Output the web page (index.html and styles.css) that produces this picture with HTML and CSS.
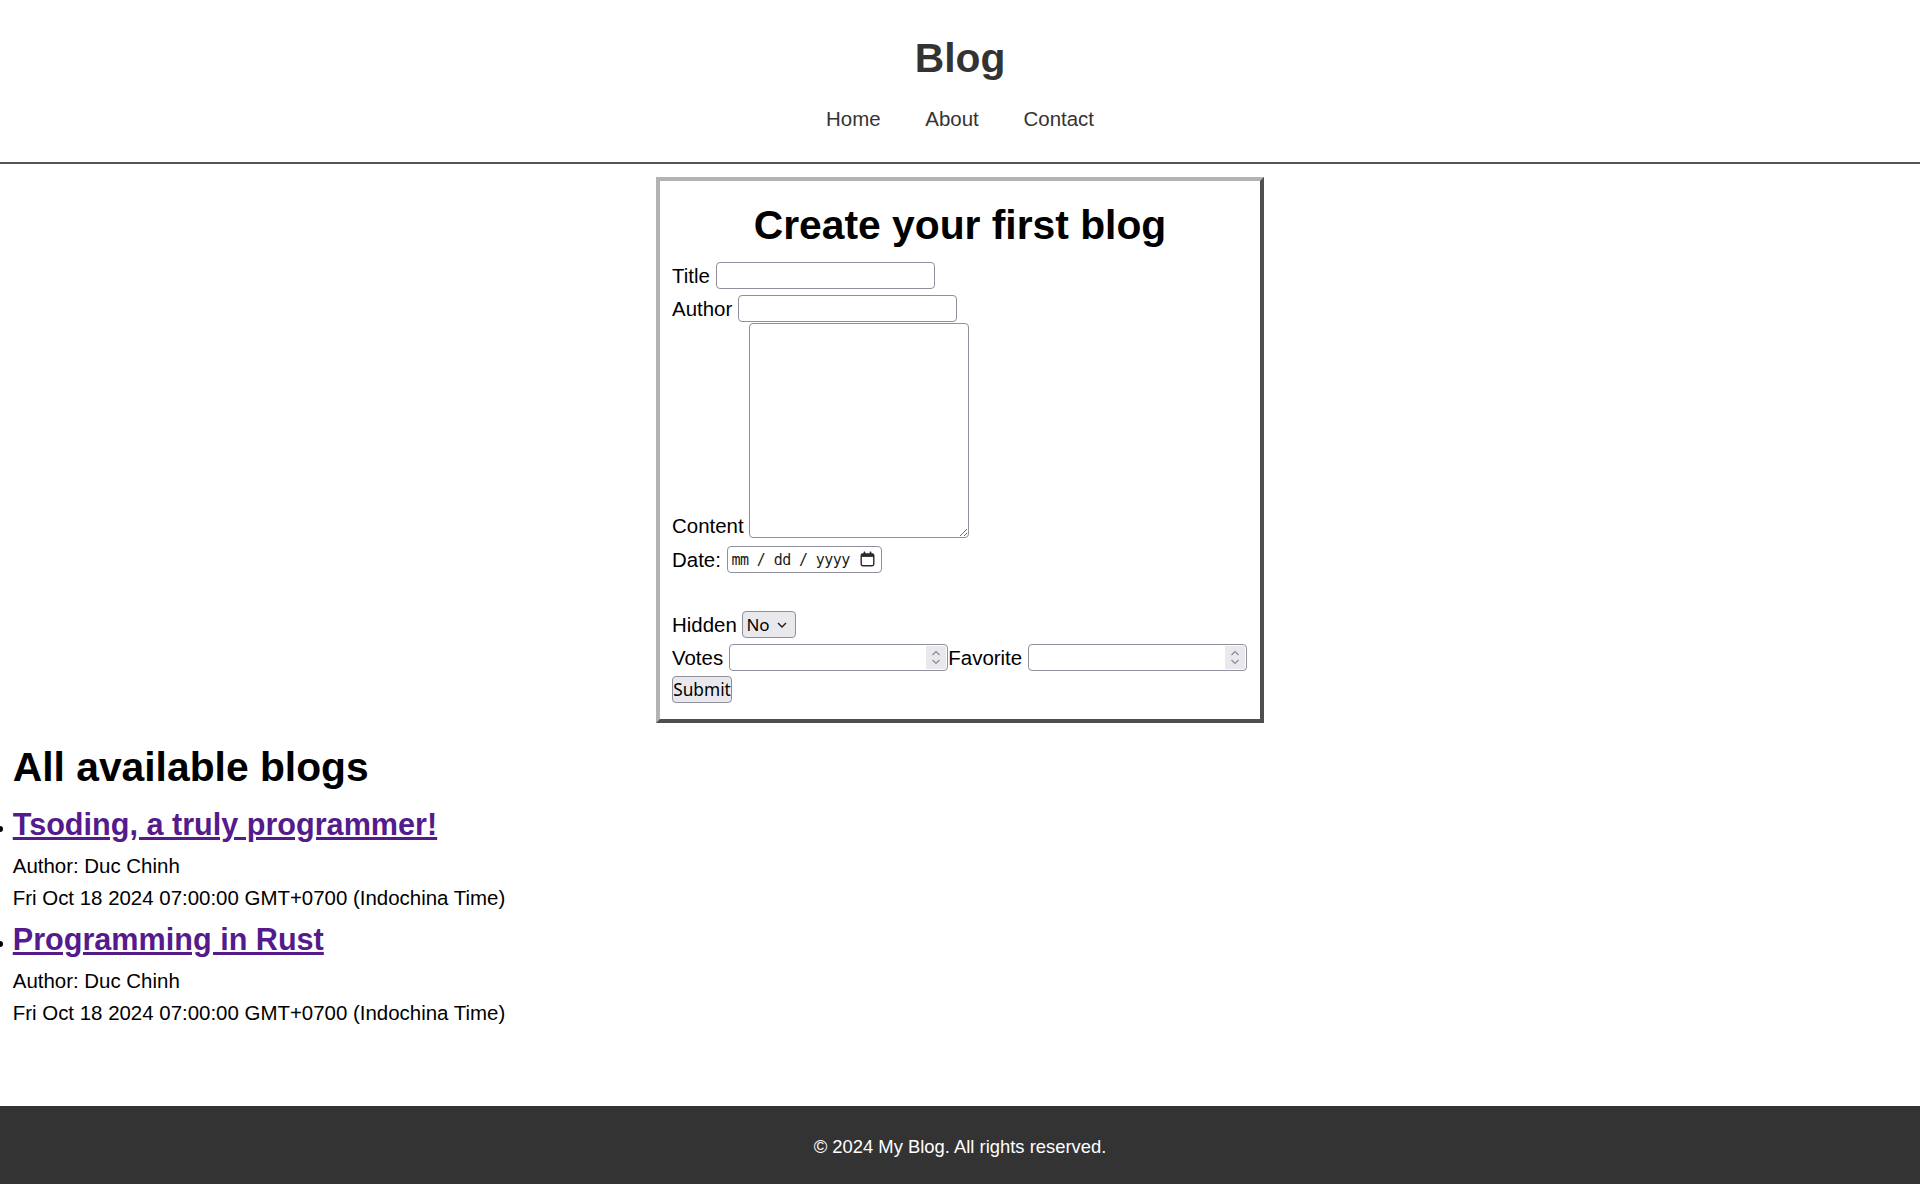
FILE: index.html
```html
<!DOCTYPE html>
<html lang="en">
<head>
<meta charset="utf-8">
<title>Blog</title>
<link rel="stylesheet" href="styles.css">
</head>
<body>
<header class="site-header">
  <h1 class="site-title">Blog</h1>
  <nav class="site-nav">
    <a href="#">Home</a>
    <a href="#">About</a>
    <a href="#">Contact</a>
  </nav>
</header>
<main class="content">
  <section class="create-box">
    <h1 class="create-title">Create your first blog</h1>
    <form class="blog-form">
      <div class="row row-title"><label for="title">Title</label><input class="field text" id="title" type="text"></div>
      <div class="row row-author"><label for="author">Author</label><input class="field text" id="author" type="text"></div>
      <div class="row row-content"><label for="content">Content</label><textarea class="field area" id="content"></textarea></div>
      <div class="row row-date"><label for="date">Date:</label><span class="date-field"><input class="date-input" id="date" type="text" placeholder="mm / dd / yyyy"><svg class="cal" width="15" height="16" viewBox="0 0 15 16"><rect x="1.2" y="2.9" width="12.6" height="11.9" rx="1.7" fill="none" stroke="#2b2b2b" stroke-width="1.4"/><rect x="1.2" y="2.9" width="12.6" height="3" fill="#2b2b2b"/><rect x="3.6" y="0.6" width="1.7" height="3.2" rx="0.5" fill="#2b2b2b"/><rect x="9.7" y="0.6" width="1.7" height="3.2" rx="0.5" fill="#2b2b2b"/></svg></span></div>
      <div class="row row-hidden"><label for="hidden">Hidden</label><span class="select-wrap"><select id="hidden" class="select"><option>No</option><option>Yes</option></select><svg class="chev" width="10" height="6" viewBox="0 0 10 6"><path d="M1 1 L5 5 L9 1" fill="none" stroke="#1a1a1a" stroke-width="1.4"/></svg></span></div>
      <div class="row row-votes"><label for="votes">Votes</label><span class="num-wrap"><input class="field num" id="votes" type="number"><span class="spin"><svg width="10" height="17" viewBox="0 0 10 17"><path d="M1.5 6 L5 2.5 L8.5 6" fill="none" stroke="#8a8a94" stroke-width="1.2"/><path d="M1.5 11 L5 14.5 L8.5 11" fill="none" stroke="#8a8a94" stroke-width="1.2"/></svg></span></span><label for="fav">Favorite</label><span class="num-wrap"><input class="field num" id="fav" type="number"><span class="spin"><svg width="10" height="17" viewBox="0 0 10 17"><path d="M1.5 6 L5 2.5 L8.5 6" fill="none" stroke="#8a8a94" stroke-width="1.2"/><path d="M1.5 11 L5 14.5 L8.5 11" fill="none" stroke="#8a8a94" stroke-width="1.2"/></svg></span></span></div>
      <div class="row row-submit"><button class="submit" type="submit">Submit</button></div>
    </form>
  </section>

  <h1 class="list-title">All available blogs</h1>
  <ul class="blog-list">
    <li class="blog-item">
      <h2 class="blog-name"><a href="#">Tsoding, a truly programmer!</a></h2>
      <p class="meta">Author: Duc Chinh</p>
      <p class="meta">Fri Oct 18 2024 07:00:00 GMT+0700 (Indochina Time)</p>
    </li>
    <li class="blog-item">
      <h2 class="blog-name"><a href="#">Programming in Rust</a></h2>
      <p class="meta">Author: Duc Chinh</p>
      <p class="meta">Fri Oct 18 2024 07:00:00 GMT+0700 (Indochina Time)</p>
    </li>
  </ul>
</main>
<footer class="site-footer">
  <p>© 2024 My Blog. All rights reserved.</p>
</footer>
</body>
</html>
```

FILE: styles.css
```css
html, body {
  margin: 0;
  padding: 0;
}

body {
  font-family: "Liberation Sans", Arial, sans-serif;
  font-size: 20.45px;
  color: #000;
  background: #fff;
  min-height: 100vh;
  display: flex;
  flex-direction: column;
}

/* Header */
.site-header {
  text-align: center;
  padding: 35px 0 31px;
  border-bottom: 2px solid #555;
}

.site-title {
  margin: 0;
  font-size: 40.8px;
  line-height: 47px;
  color: #333;
}

.site-nav {
  margin-top: 25px;
  display: flex;
  justify-content: center;
  gap: 44.75px;
  line-height: 24px;
}

.site-nav a {
  color: #333;
  text-decoration: none;
}

/* Main */
.content {
  flex: 1;
  padding: 0 12.75px;
}

.create-box {
  box-sizing: border-box;
  width: 608px;
  margin: 13px auto 0;
  border: 4px solid;
  border-color: #b3b3b3 #4f4f4f #4f4f4f #b3b3b3;
  padding: 20.5px 12px 16px;
}

.create-title {
  margin: 0;
  text-align: center;
  font-size: 40.8px;
  line-height: 47px;
}

.row {
  display: flex;
  align-items: center;
}

.row label {
  margin-right: 5.7px;
  line-height: 24px;
}

.row-title { margin-top: 13.5px; }
.row-author { margin-top: 6px; }
.row-content { margin-top: 1px; align-items: flex-end; }
.row-date { margin-top: 8.5px; }
.row-hidden { margin-top: 38px; }
.row-votes { margin-top: 6px; }
.row-submit { margin-top: 5px; }

.field {
  box-sizing: border-box;
  margin: 0;
  border: 1px solid #8f8f9d;
  border-radius: 4px;
  background: #fff;
  font-family: "Noto Sans", sans-serif;
  font-size: 17px;
  padding: 1px 3px;
  outline: none;
}

.text {
  width: 219px;
  height: 27px;
}

.area {
  width: 220px;
  height: 214.5px;
  resize: both;
}

/* Date */
.date-field {
  position: relative;
  display: inline-flex;
  align-items: center;
  box-sizing: border-box;
  width: 155px;
  height: 27px;
  border: 1px solid #8f8f9d;
  border-radius: 4px;
  background: #fff;
}

.date-input {
  border: 0;
  outline: none;
  background: transparent;
  width: 124px;
  padding: 0 0 0 4px;
  font-family: "DejaVu Sans Mono", monospace;
  font-size: 15px;
  letter-spacing: -0.6px;
  color: #000;
}

.date-input::placeholder {
  color: #1a1a1a;
  opacity: 1;
}

.cal {
  position: absolute;
  right: 6px;
  top: 4px;
}

/* Select */
.select-wrap {
  position: relative;
  display: inline-block;
}

.select {
  appearance: none;
  -webkit-appearance: none;
  box-sizing: border-box;
  width: 54px;
  height: 27px;
  margin: 0;
  padding: 0 0 0 3px;
  border: 1px solid #8f8f9d;
  border-radius: 4px;
  background: #e9e9ed;
  color: #000;
  font-family: "Noto Sans", sans-serif;
  font-size: 17px;
  display: block;
}

.chev {
  position: absolute;
  right: 9px;
  top: 11px;
  pointer-events: none;
}

/* Number */
.num-wrap {
  position: relative;
  display: inline-block;
}

.num {
  width: 219.5px;
  height: 27px;
  display: block;
  -moz-appearance: textfield;
}

.num::-webkit-inner-spin-button,
.num::-webkit-outer-spin-button {
  -webkit-appearance: none;
  margin: 0;
}

.spin {
  position: absolute;
  right: 2px;
  top: 2px;
  bottom: 2px;
  width: 20px;
  background: #e9e9ed;
  display: flex;
  align-items: center;
  justify-content: center;
  pointer-events: none;
}

/* Submit */
.submit {
  box-sizing: border-box;
  width: 60px;
  height: 27px;
  margin: 0;
  padding: 0;
  border: 1px solid #8f8f9d;
  border-radius: 4px;
  background: #e9e9ed;
  color: #000;
  font-family: "Noto Sans", sans-serif;
  font-size: 17.3px;
}

/* List */
.list-title {
  margin: 21px 0 0;
  font-size: 40.8px;
  line-height: 47px;
}

.blog-list {
  margin: 15.5px 0 0;
  padding: 0;
  list-style: none;
}

.blog-item {
  position: relative;
}

.blog-item::before {
  content: "";
  position: absolute;
  left: -15.5px;
  top: 19.5px;
  width: 6px;
  height: 6px;
  border-radius: 50%;
  background: #000;
}

.blog-item + .blog-item {
  margin-top: 12px;
}

.blog-name {
  margin: 0;
  font-size: 30.6px;
  line-height: 35px;
}

.blog-name a {
  color: #551a8b;
}

.meta {
  margin: 12px 0 0;
  line-height: 24px;
}

.meta + .meta {
  margin-top: 8px;
}

/* Footer */
.site-footer {
  background: #333;
  color: #fff;
  text-align: center;
  padding: 30px 0 27px;
  font-size: 18.4px;
  line-height: 21px;
}

.site-footer p {
  margin: 0;
}
```
